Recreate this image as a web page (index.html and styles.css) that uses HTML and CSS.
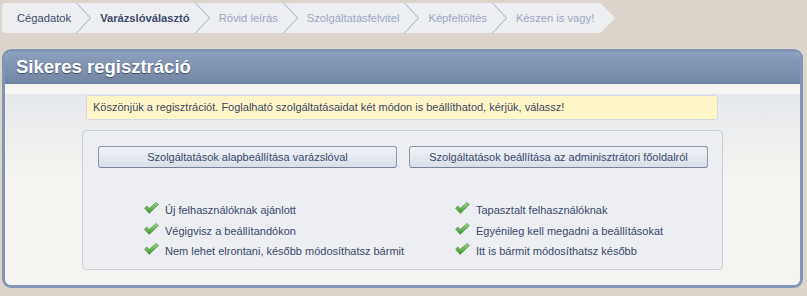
FILE: index.html
```html
<!DOCTYPE html>
<html lang="hu">
<head>
    <meta charset="UTF-8">
    <title>Sikeres regisztráció</title>
    <link rel="stylesheet" href="styles.css">
</head>
<body>

    <div class="steps">
        <span class="step done">Cégadatok</span>
        <svg class="sep" width="15" height="30" viewBox="0 0 15 30"><polyline points="0.5,0 14.5,15 0.5,30" /></svg>
        <span class="step active">Varázslóválasztó</span>
        <svg class="sep" width="15" height="30" viewBox="0 0 15 30"><polyline points="0.5,0 14.5,15 0.5,30" /></svg>
        <span class="step">Rövid leírás</span>
        <svg class="sep" width="15" height="30" viewBox="0 0 15 30"><polyline points="0.5,0 14.5,15 0.5,30" /></svg>
        <span class="step">Szolgáltatásfelvitel</span>
        <svg class="sep" width="15" height="30" viewBox="0 0 15 30"><polyline points="0.5,0 14.5,15 0.5,30" /></svg>
        <span class="step">Képfeltöltés</span>
        <svg class="sep" width="15" height="30" viewBox="0 0 15 30"><polyline points="0.5,0 14.5,15 0.5,30" /></svg>
        <span class="step">Készen is vagy!</span>
    </div>

    <div class="panel">
        <div class="panel-head">
            <h1>Sikeres regisztráció</h1>
        </div>
        <div class="panel-band"></div>
        <div class="panel-body">
            <div class="notice">Köszönjük a regisztrációt. Foglalható szolgáltatásaidat két módon is beállíthatod, kérjük, válassz!</div>

            <div class="choice">
                <div class="choice-col">
                    <button class="btn">Szolgáltatások alapbeállítása varázslóval</button>
                    <ul class="checks">
                        <li><svg class="tick" width="15" height="12" viewBox="0 0 15 12"><use href="#tick" /></svg>Új felhasználóknak ajánlott</li>
                        <li><svg class="tick" width="15" height="12" viewBox="0 0 15 12"><use href="#tick" /></svg>Végigvisz a beállítandókon</li>
                        <li><svg class="tick" width="15" height="12" viewBox="0 0 15 12"><use href="#tick" /></svg>Nem lehet elrontani, később módosíthatsz bármit</li>
                    </ul>
                </div>
                <div class="choice-col">
                    <button class="btn">Szolgáltatások beállítása az adminisztrátori főoldalról</button>
                    <ul class="checks">
                        <li><svg class="tick" width="15" height="12" viewBox="0 0 15 12"><use href="#tick" /></svg>Tapasztalt felhasználóknak</li>
                        <li><svg class="tick" width="15" height="12" viewBox="0 0 15 12"><use href="#tick" /></svg>Egyénileg kell megadni a beállításokat</li>
                        <li><svg class="tick" width="15" height="12" viewBox="0 0 15 12"><use href="#tick" /></svg>Itt is bármit módosíthatsz később</li>
                    </ul>
                </div>
            </div>
        </div>
    </div>

    <!-- shared check mark -->
    <svg width="0" height="0" class="defs">
        <defs>
            <linearGradient id="tickfill" x1="0" y1="0" x2="0" y2="1">
                <stop offset="0" stop-color="#9ad886" />
                <stop offset="1" stop-color="#3f9630" />
            </linearGradient>
            <g id="tick">
                <polygon points="0.6,6.2 2.8,4 5.2,6.4 12.2,0.4 14.4,2.6 5.2,11.4" fill="url(#tickfill)" stroke="#4d8f3d" stroke-width="0.7" stroke-linejoin="round" />
            </g>
        </defs>
    </svg>

</body>
</html>
```

FILE: styles.css
```css
*{
    margin: 0;
    padding: 0;
    box-sizing: border-box;
}

body{
    background-color: #ddd5cb;
    font-family: "Liberation Sans", Arial, sans-serif;
    font-size: 11px;
    color: #3b4a6a;
}

.defs{
    position: absolute;
}

/* breadcrumb */

.steps{
    display: flex;
    align-items: center;
    width: fit-content;
    height: 30px;
    margin: 3px 0 0 2px;
    padding: 0 21px 0 15px;
    background-color: #eceef2;
    border-radius: 4px 0 0 4px;
    clip-path: polygon(0 0, calc(100% - 15px) 0, 100% 50%, calc(100% - 15px) 100%, 0 100%);
}

.step{
    font-size: 11.2px;
    color: #9ea9c2;
    white-space: nowrap;
}

.step.done{
    color: #3e4c6a;
}

.step.active{
    color: #3e4c6a;
    font-weight: bold;
}

.sep{
    display: block;
    margin: 0 9px 0 5px;
}

.sep polyline{
    fill: none;
    stroke: #a3aec4;
    stroke-width: 1;
}

/* panel */

.panel{
    margin: 16px 4px 0 2px;
    border: 3px solid #8296b3;
    border-radius: 9px;
    overflow: hidden;
    background-color: #f4f3ef;
    box-shadow: inset 0 -2px 0 #dfe5ee;
}

.panel-head{
    height: 32px;
    padding-left: 11px;
    background: linear-gradient(#8d9fbe, #7286a4);
    border-bottom: 1px solid #6e82a0;
}

.panel-head h1{
    font-size: 18.5px;
    line-height: 30px;
    color: #fff;
    text-shadow: 0 1px 1px rgba(40, 55, 85, 0.7);
}

.panel-band{
    height: 10px;
    background-color: #f5f4f0;
}

.panel-body{
    padding: 1px 0 15px;
    background: linear-gradient(#e5e8ed, #f4f3ef 80px);
}

.notice{
    height: 25px;
    margin: 0 82px 0 81px;
    padding-left: 6px;
    line-height: 23px;
    font-size: 11px;
    color: #3b4763;
    background-color: #fff6c8;
    border: 1px solid #d3d8e2;
    border-radius: 3px;
}

.choice{
    display: grid;
    grid-template-columns: repeat(2, 299px);
    gap: 12px;
    margin: 10px 77px 0;
    padding: 15px 15px 7px;
    background-color: #eceef2;
    border: 1px solid #c9ced8;
    border-radius: 4px;
}

.btn{
    display: block;
    width: 100%;
    height: 22px;
    font-family: inherit;
    font-size: 11px;
    color: #3b4b6d;
    background: linear-gradient(#f1f3f6, #d9dee7);
    border: 1px solid #8d98a9;
    border-bottom-color: #77839a;
    border-radius: 3px;
}

.checks{
    list-style: none;
    margin-top: 32px;
    padding-left: 46px;
}

.checks li{
    display: flex;
    align-items: center;
    height: 20.5px;
    white-space: nowrap;
}

.tick{
    flex: none;
    margin: -4px 6px 0 0;
}
```
